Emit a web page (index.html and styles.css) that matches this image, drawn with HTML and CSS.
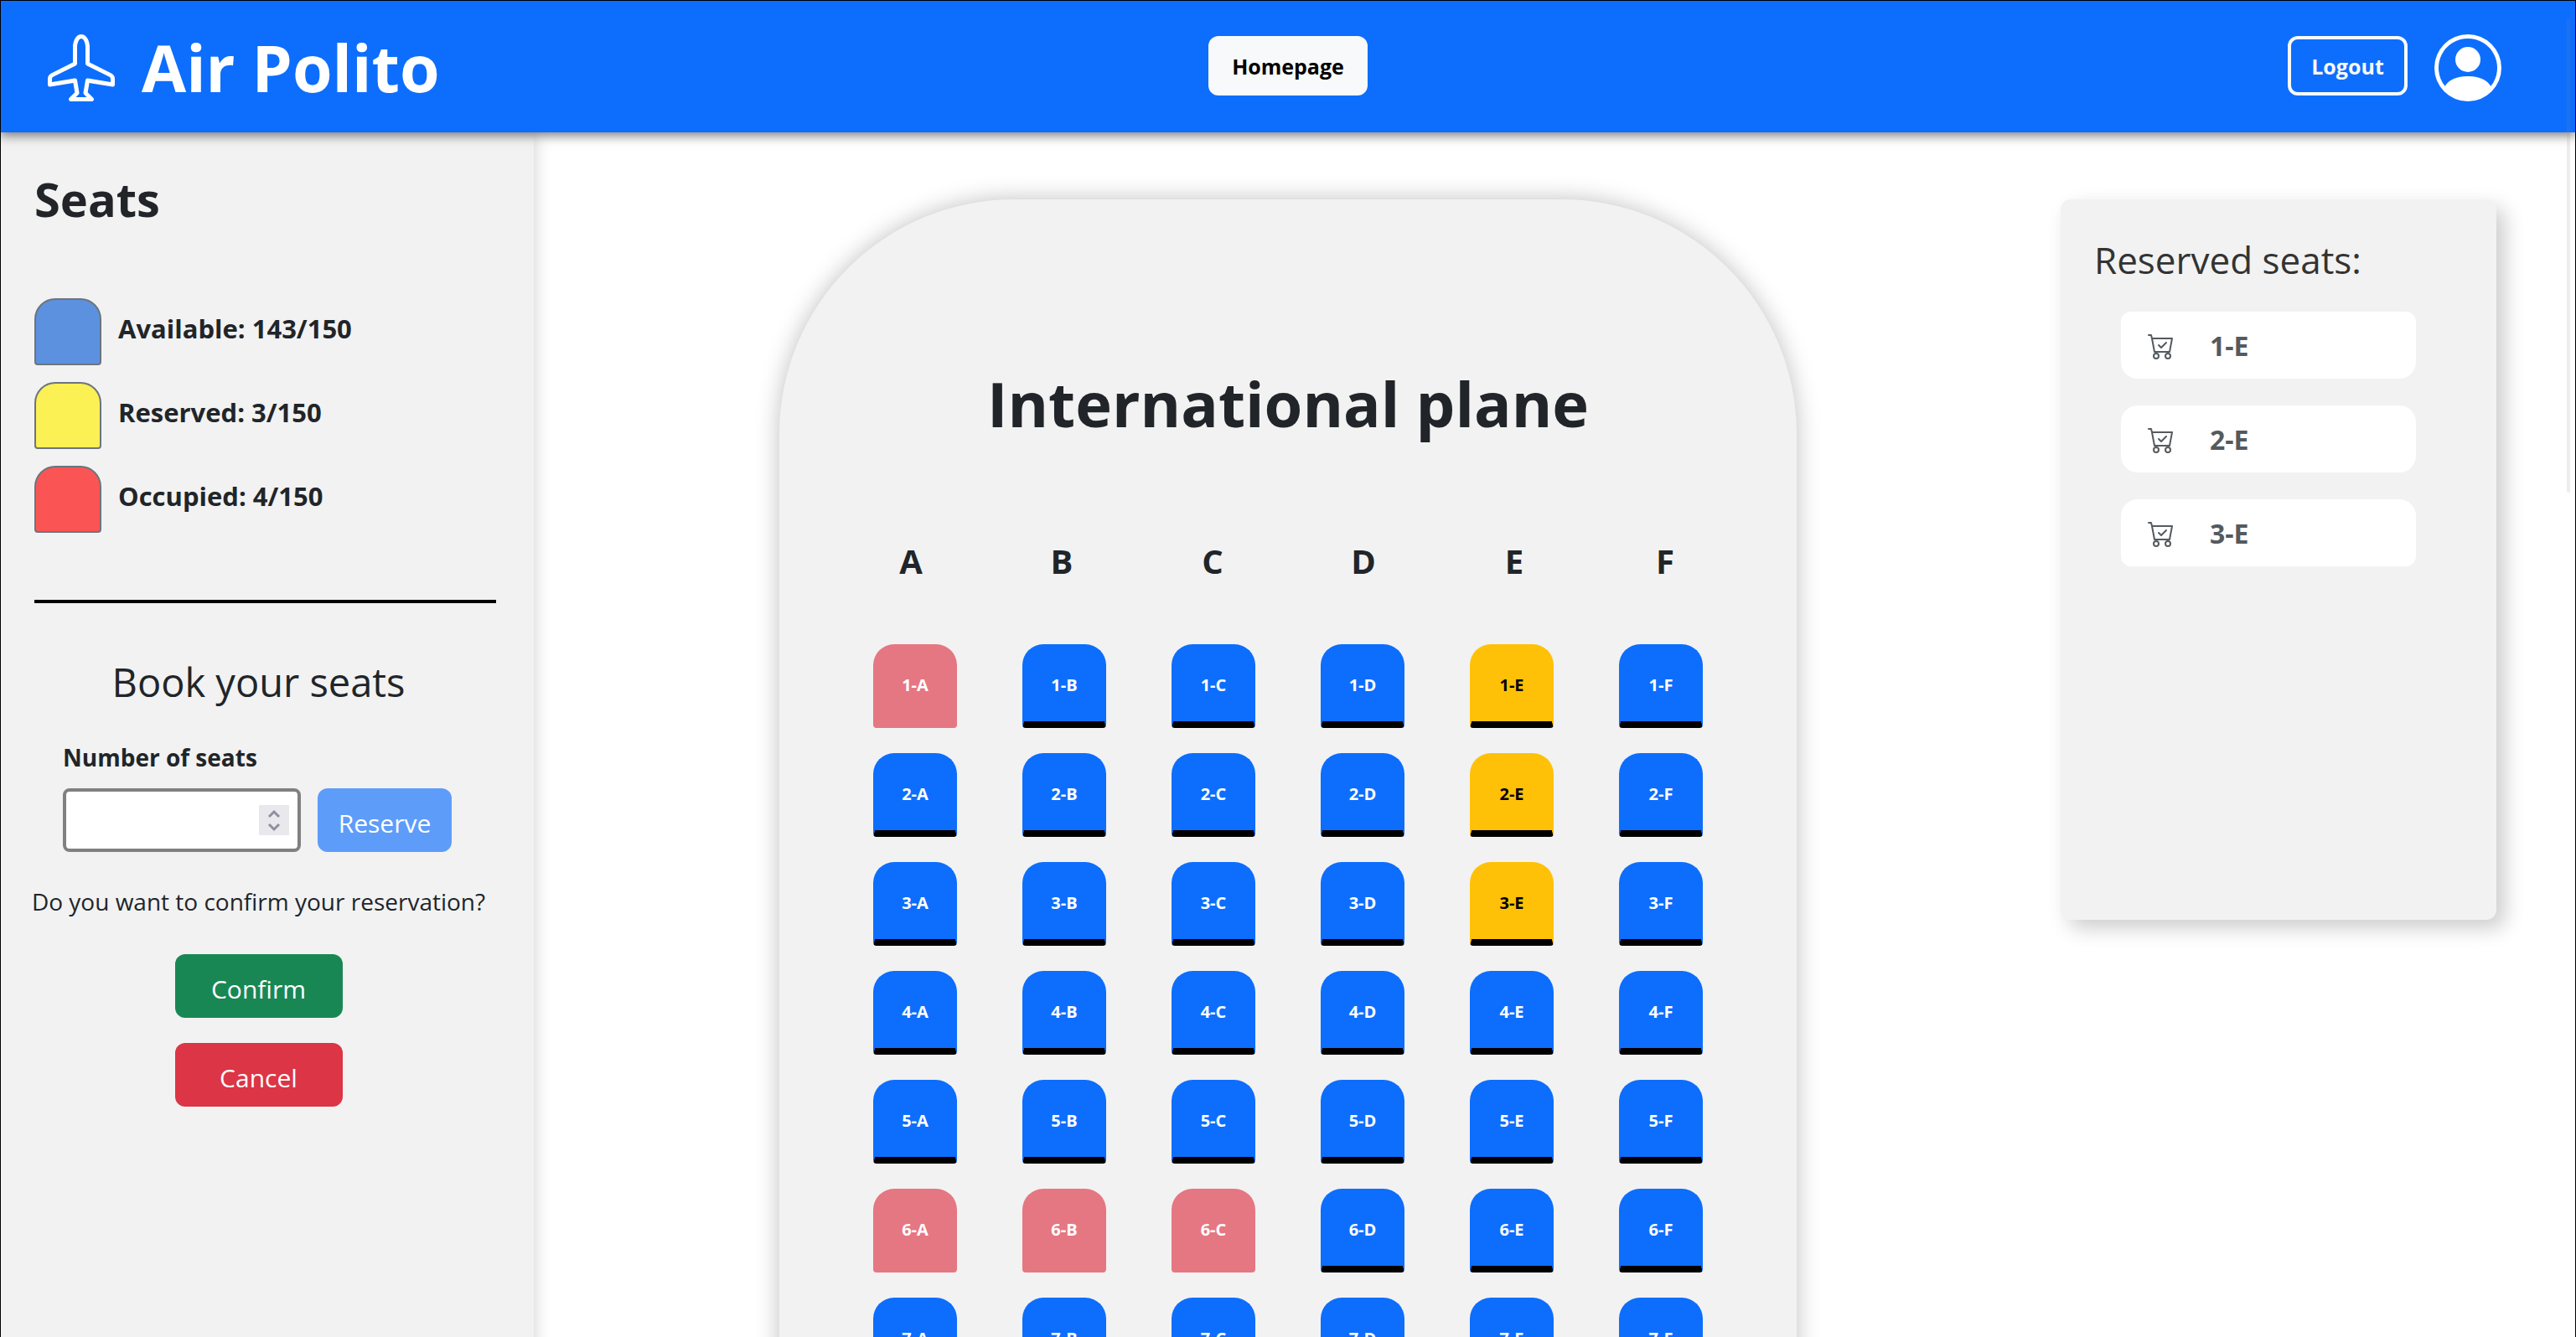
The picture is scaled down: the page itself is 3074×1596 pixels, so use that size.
FILE: index.html
```html
<!DOCTYPE html>
<html lang="en">
<head>
<meta charset="utf-8">
<title>Air Polito</title>
<link rel="stylesheet" href="styles.css">
</head>
<body>
<header class="navbar">
  <a class="brand" href="#">
    <svg class="brand-icon" viewBox="0 0 16 16" aria-hidden="true"><path d="M6.428 1.151C6.708.591 7.213 0 8 0s1.292.592 1.572 1.151C9.861 1.73 10 2.431 10 3v3.691l5.17 2.585a1.5 1.5 0 0 1 .83 1.342V12a.5.5 0 0 1-.582.493l-5.507-.918-.375 2.253 1.318 1.318A.5.5 0 0 1 10.5 16h-5a.5.5 0 0 1-.354-.854l1.319-1.318-.376-2.253-5.507.918A.5.5 0 0 1 0 12v-1.382a1.5 1.5 0 0 1 .83-1.342L6 6.691V3c0-.568.14-1.271.428-1.849Zm.894.448C7.111 2.02 7 2.569 7 3v4a.5.5 0 0 1-.276.447l-5.448 2.724a.5.5 0 0 0-.276.447v.792l5.418-.903a.5.5 0 0 1 .575.41l.5 3a.5.5 0 0 1-.14.437L6.708 15h2.586l-.647-.646a.5.5 0 0 1-.14-.436l.5-3a.5.5 0 0 1 .576-.411L15 11.41v-.792a.5.5 0 0 0-.276-.447L9.276 7.447A.5.5 0 0 1 9 7V3c0-.432-.11-.979-.322-1.401C8.458 1.159 8.213 1 8 1c-.213 0-.458.158-.678.599Z"/></svg>
    <span>Air Polito</span>
  </a>
  <button class="nav-button nav-home" type="button">Homepage</button>
  <div class="account">
    <button class="nav-button nav-logout" type="button">Logout</button>
    <svg class="avatar" viewBox="0 0 16 16" aria-hidden="true"><path d="M11 6a3 3 0 1 1-6 0 3 3 0 0 1 6 0z"/><path fill-rule="evenodd" d="M0 8a8 8 0 1 1 16 0A8 8 0 0 1 0 8zm8-7a7 7 0 0 0-5.468 11.37C3.242 11.226 4.805 10 8 10s4.757 1.225 5.468 2.37A7 7 0 0 0 8 1z"/></svg>
  </div>
</header>
<div class="page">
  <aside class="sidebar">
    <h2 class="sidebar-title">Seats</h2>
    <ul class="legend">
      <li><span class="swatch swatch-available"></span><span>Available: 143/150</span></li>
      <li><span class="swatch swatch-reserved"></span><span>Reserved: 3/150</span></li>
      <li><span class="swatch swatch-occupied"></span><span>Occupied: 4/150</span></li>
    </ul>
    <hr class="divider">
    <form class="booking">
      <h3 class="booking-title">Book your seats</h3>
      <label class="booking-label" for="seat-count">Number of seats</label>
      <div class="booking-row">
        <div class="number-field">
          <input id="seat-count" type="number" min="1">
          <svg class="spinner" viewBox="0 0 36 36" aria-hidden="true"><path d="M12 14l6-6 6 6M12 23l6 6 6-6"/></svg>
        </div>
        <button class="action reserve" type="button" disabled>Reserve</button>
      </div>
      <p class="question">Do you want to confirm your reservation?</p>
      <button class="action confirm" type="button">Confirm</button>
      <button class="action cancel" type="button">Cancel</button>
    </form>
  </aside>
  <main class="cabin">
    <section class="plane">
      <h1 class="plane-title">International plane</h1>
      <div class="columns"><span>A</span><span>B</span><span>C</span><span>D</span><span>E</span><span>F</span></div>
      <div class="seats" id="seats"></div>
    </section>
  </main>
  <aside class="reserved">
    <h3 class="reserved-title">Reserved seats:</h3>
    <ul class="reserved-list">
      <li><svg class="cart" viewBox="0 0 16 16" aria-hidden="true"><use href="#cart-check"/></svg>1-E</li>
      <li><svg class="cart" viewBox="0 0 16 16" aria-hidden="true"><use href="#cart-check"/></svg>2-E</li>
      <li><svg class="cart" viewBox="0 0 16 16" aria-hidden="true"><use href="#cart-check"/></svg>3-E</li>
    </ul>
  </aside>
</div>
<div class="scroll-thumb"></div>
<div class="frame"></div>
<svg class="symbols" aria-hidden="true"><symbol id="cart-check" viewBox="0 0 16 16"><path d="M11.354 6.354a.5.5 0 0 0-.708-.708L8 8.293 6.854 7.146a.5.5 0 1 0-.708.708l1.5 1.5a.5.5 0 0 0 .708 0l3-3z"/><path d="M.5 1a.5.5 0 0 0 0 1h1.11l.401 1.607 1.498 7.985A.5.5 0 0 0 4 12h1a2 2 0 1 0 0 4 2 2 0 0 0 0-4h7a2 2 0 1 0 0 4 2 2 0 0 0 0-4h1a.5.5 0 0 0 .491-.408l1.5-8A.5.5 0 0 0 14.5 3H2.89l-.405-1.621A.5.5 0 0 0 2 1H.5zm3.915 10L3.102 4h10.796l-1.313 7h-8.17zM6 14a1 1 0 1 1-2 0 1 1 0 0 1 2 0zm7 0a1 1 0 1 1-2 0 1 1 0 0 1 2 0z"/></symbol></svg>
<script src="seats.js"></script>
</body>
</html>
```

FILE: styles.css
```css
* { box-sizing: border-box; }

body {
  margin: 0;
  height: 100vh;
  overflow: hidden;
  display: flex;
  flex-direction: column;
  background: #fff;
  color: #212529;
  font-family: "Open Sans", "Noto Sans", sans-serif;
  font-size: 28px;
  line-height: 1.5;
}

h1, h2, h3, p, ul { margin: 0; padding: 0; }
ul { list-style: none; }
button, input { font: inherit; }

.navbar {
  flex: none;
  display: grid;
  grid-template-columns: 1fr auto 1fr;
  align-items: center;
  height: 158px;
  padding: 4px 57px 0;
  background: #0d6efd;
  color: #fff;
  box-shadow: 0 4px 12px rgba(0, 0, 0, .5);
  position: relative;
  z-index: 2;
}

.brand {
  display: flex;
  align-items: center;
  gap: 32px;
  color: inherit;
  text-decoration: none;
  font-size: 77px;
  font-weight: 700;
  line-height: 120px;
}
.brand-icon, .avatar { width: 80px; height: 80px; fill: #fff; }

.nav-button {
  height: 71px;
  margin-bottom: 5px;
  padding: 2px 0 0;
  border: 4px solid #f8f9fa;
  border-radius: 12px;
  font-size: 25px;
  font-weight: 700;
}
.nav-home { width: 190px; background: #f8f9fa; color: #000; }
.nav-logout { width: 143px; background: transparent; color: #f8f9fa; }
.account { display: flex; justify-content: flex-end; align-items: center; gap: 32px; padding-right: 32px; }

.page {
  flex: 1;
  min-height: 0;
  display: grid;
  grid-template-columns: 637px 1fr 637px;
}

.sidebar {
  padding: 40px 45px 40px 41px;
  background: #f2f2f2;
  box-shadow: 0 0 20px rgba(0, 0, 0, .2);
}
.sidebar-title { font-size: 56px; line-height: 78px; }

.legend { display: grid; gap: 20px; margin-top: 80px; font-size: 31px; font-weight: 700; }
.legend li { display: flex; gap: 20px; line-height: 72px; }
.swatch { width: 80px; height: 80px; border: 2px solid #6c757d; border-radius: 25px 25px 4px 4px; }
.swatch-available { background: #5c91e0; }
.swatch-reserved { background: #fbf054; }
.swatch-occupied { background: #fb5454; }

.divider { height: 4px; margin: 80px 0 0; border: 0; background: #000; }

.booking { display: flex; flex-direction: column; align-items: center; margin: 58px 16px 0 0; }
.booking-title { font-size: 47px; font-weight: 400; line-height: 72px; }
.booking-label { align-self: flex-start; margin: 34px 0 17px 34px; font-weight: 700; line-height: 40px; }
.booking-row { display: flex; align-self: flex-start; gap: 20px; margin-left: 34px; }
.number-field { position: relative; width: 284px; height: 76px; }
.number-field input {
  width: 100%;
  height: 100%;
  padding: 0 56px 0 16px;
  border: 4px solid #808080;
  border-radius: 8px;
  background: #fff;
  appearance: textfield;
}
.spinner {
  position: absolute;
  top: 20px;
  right: 14px;
  width: 36px;
  height: 36px;
  background: #e9e9ed;
  fill: none;
  stroke: #8f8f9d;
  stroke-width: 3;
}
.action {
  width: 200px;
  height: 76px;
  padding: 6px 0 0;
  border: 0;
  border-radius: 12px;
  color: #fff;
  font-size: 30px;
}
.reserve { width: 160px; background: #5e9cfa; }
.question { margin: 38px 0 42px; line-height: 42px; white-space: nowrap; }
.confirm { background: #198754; }
.cancel { margin-top: 30px; background: #dc3545; }

.cabin { display: flex; justify-content: center; align-items: flex-start; padding-top: 80px; }
.plane {
  width: 1214px;
  padding: 178px 112px 200px;
  border-radius: 280px 280px 0 0;
  background: #f2f2f2;
  box-shadow: 0 0 28px rgba(0, 0, 0, .25);
}
.plane-title { font-size: 74px; line-height: 132px; text-align: center; }
.columns { display: grid; grid-template-columns: repeat(6, 180px); justify-content: center; margin-top: 92px; font-size: 40px; font-weight: 700; line-height: 60px; text-align: center; }
.seats { display: grid; grid-template-columns: repeat(6, 100px); justify-content: space-between; row-gap: 30px; margin-top: 69px; }
.seat {
  height: 100px;
  padding: 4px 0 0;
  border: 2px solid #0d6efd;
  border-bottom: 8px solid #000;
  border-radius: 25px 25px 4px 4px;
  background: #0d6efd;
  color: #fff;
  font-size: 20px;
  font-weight: 700;
}
.seat-mine { border-color: #ffc107 #ffc107 #000; background: #ffc107; color: #000; }
.seat-taken { border-color: #e57782; background: #e57782; }

.reserved {
  justify-self: end;
  width: 520px;
  height: 860px;
  margin: 80px 95px 0 0;
  padding: 36px 40px;
  border-radius: 12px;
  background: #f2f2f2;
  box-shadow: 10px 10px 24px rgba(0, 0, 0, .2);
}
.reserved-title { color: #333; font-size: 44px; font-weight: 400; line-height: 72px; }
.reserved-list { display: grid; gap: 32px; margin: 26px 56px 0 32px; }
.reserved-list li {
  display: flex;
  align-items: center;
  gap: 42px;
  height: 80px;
  padding: 2px 32px 0;
  border-radius: 20px;
  background: #fff;
  color: #555a5e;
  font-size: 32px;
  font-weight: 700;
}
.reserved-list li:first-child { border-radius: 12px 12px 20px 20px; }
.reserved-list li:last-child { border-radius: 20px 20px 12px 12px; }
.cart { width: 32px; height: 32px; fill: currentColor; }

.scroll-thumb { position: fixed; z-index: 3; top: 22px; right: 7px; width: 4px; height: 566px; border-radius: 2px; background: rgba(136, 136, 136, .15); }
.frame { position: fixed; z-index: 4; inset: 0; border: 1px solid #000; border-bottom: 0; pointer-events: none; }
.symbols { position: absolute; width: 0; height: 0; }
```

FILE: seats.js
```js
const rows = 7;
const taken = new Set(["1-A", "6-A", "6-B", "6-C"]);
const mine = new Set(["1-E", "2-E", "3-E"]);
const grid = document.getElementById("seats");

for (let row = 1; row <= rows; row++) {
  for (const letter of "ABCDEF") {
    const name = row + "-" + letter;
    const seat = document.createElement("button");
    seat.type = "button";
    seat.className = "seat";
    if (taken.has(name)) {
      seat.classList.add("seat-taken");
      seat.disabled = true;
    }
    if (mine.has(name)) seat.classList.add("seat-mine");
    seat.textContent = name;
    grid.append(seat);
  }
}
```
